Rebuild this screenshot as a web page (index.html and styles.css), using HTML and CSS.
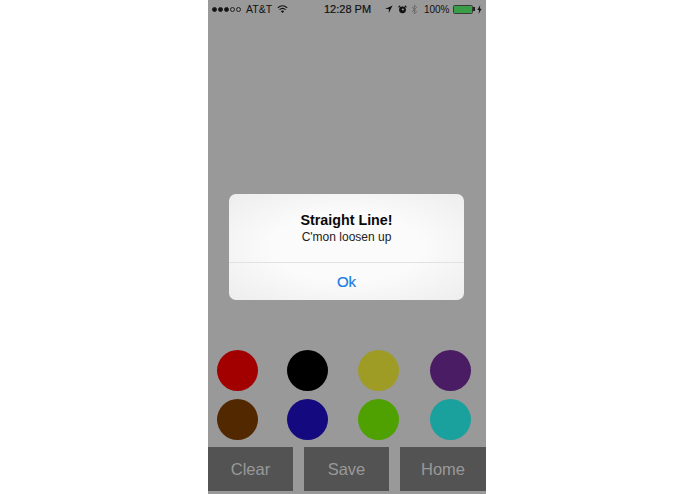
FILE: index.html
```html
<!DOCTYPE html>
<html lang="en">
<head>
<meta charset="utf-8">
<title>Straight Line</title>
<link rel="stylesheet" href="styles.css">
</head>
<body>
<main class="phone">
  <header class="status">
    <div class="status-side">
      <span class="signal"><i class="on"></i><i class="on"></i><i class="on"></i><i></i><i></i></span>
      <span class="carrier">AT&amp;T</span>
      <svg class="wifi" viewBox="0 0 14 10" width="11" height="8"><path d="M1 3.600C4.600.2 9.400.2 13 3.600" fill="none" stroke="#111" stroke-width="1.500"/><path d="M3.200 5.800c2.400-2.200 5.200-2.200 7.600 0" fill="none" stroke="#111" stroke-width="1.500"/><path d="M7 10 4.900 7.800c1.300-1 2.900-1 4.200 0z" fill="#111"/></svg>
    </div>
    <div class="time">12:28 PM</div>
    <div class="status-side status-right">
      <svg class="arrow" viewBox="0 0 10 10" width="8" height="8"><path d="M9.500.5 0 5h4.800V10z" fill="#111"/></svg>
      <svg class="alarm" viewBox="0 0 10 10" width="9" height="9"><circle cx="5" cy="5.400" r="3.800" fill="#111"/><circle cx="5.400" cy="5" r="1.200" fill="#999"/><path d="M.6 2.600 2.400.8M9.400 2.600 7.600.8" stroke="#111" stroke-width="1.300"/></svg>
      <svg class="bt" viewBox="0 0 8 12" width="7" height="11"><path d="M1 3.200 6.400 8.400 3.800 11V1l2.600 2.600L1 8.800" fill="none" stroke="#666" stroke-width="1"/></svg>
      <span class="pct">100%</span>
      <span class="battery"></span><span class="nub"></span>
      <svg class="bolt" viewBox="0 0 5 9" width="5" height="9"><path d="M3.200 0 .4 5h1.700L1.600 9l3-5.200H2.800z" fill="#111"/></svg>
    </div>
  </header>
  <div class="canvas"></div>
  <section class="palette">
    <span class="dot red"></span><span class="dot black"></span><span class="dot olive"></span><span class="dot purple"></span>
    <span class="dot brown"></span><span class="dot navy"></span><span class="dot green"></span><span class="dot teal"></span>
  </section>
  <nav class="toolbar">
    <button class="tool clear">Clear</button>
    <button class="tool save">Save</button>
    <button class="tool home">Home</button>
  </nav>
  <div class="overlay">
    <div class="alert">
      <div class="alert-body">
        <h1 class="alert-title">Straight Line!</h1>
        <p class="alert-text">C'mon loosen up</p>
      </div>
      <div class="alert-action">Ok</div>
    </div>
  </div>
</main>
</body>
</html>
```
FILE: styles.css
```css
html, body { margin: 0; height: 100%; background: #fff; overflow: hidden; }
body { display: flex; justify-content: flex-start; font-family: "Liberation Sans", Arial, sans-serif; }
.phone {
  position: relative;
  margin-left: 208px;
  width: 278px;
  height: 494px;
  background: #999;
  display: flex;
  flex-direction: column;
}
.status {
  height: 18px;
  padding: 0 4px;
  display: flex;
  align-items: center;
  position: relative;
  font-size: 11px;
  color: #111;
  justify-content: space-between;
}
.status-side { display: flex; align-items: center; }
.signal { display: flex; gap: 1px; margin-right: 5px; }
.signal i { border: 1px solid #222; border-radius: 50%; width: 3px; height: 3px; }
.signal i.on { background: #111; }
.carrier { margin-right: 5px; font-size: 10.500px; }
.time { position: absolute; left: 116px; top: 2px; line-height: 14px; -webkit-text-stroke: 0.2px #111; }
.arrow { margin-right: 5px; }
.alarm { margin-right: 4px; }
.bt { margin-right: 6px; }
.pct { margin-right: 3.500px; font-size: 10px; }
.battery { width: 18px; height: 7px; background: #3a9d47; border: 1px solid #3a3a3a; border-radius: 1.500px; display: block; }
.nub { width: 1.500px; height: 4px; background: #222; margin-right: 2.500px; }
.canvas { flex: 1; }
.palette {
  display: grid;
  grid-template-columns: 70px 71px 72px 41px;
  row-gap: 8px;
  padding-left: 9px;
  margin-bottom: 7px;
}
.dot { width: 41px; height: 41px; border-radius: 50%; display: block; }
.red { background: #a20000; }
.black { background: #000; }
.olive { background: #9f9c26; }
.purple { background: #491c63; }
.brown { background: #522800; }
.navy { background: #14097f; }
.green { background: #4ea100; }
.teal { background: #1aa19e; }
.toolbar {
  display: flex;
  justify-content: space-between;
  margin-bottom: 3px;
}
.tool {
  height: 44px;
  border: 0;
  padding: 0;
  background: #535353;
  color: #999;
  font: 16.500px "Liberation Sans", Arial, sans-serif;
}
.clear { width: 85px; }
.save { width: 85.500px; }
.home { width: 86px; }
.overlay {
  position: absolute;
  inset: 0;
  display: flex;
  align-items: center;
  padding-left: 21px;
}
.alert {
  width: 235px;
  height: 106px;
  border-radius: 7px;
  background: radial-gradient(ellipse at center, #fbfbfb 45%, #ededed 100%);
  display: flex;
  flex-direction: column;
  text-align: center;
}
.alert-body { height: 68px; padding-top: 18px; box-sizing: border-box; margin-bottom: 0; border-bottom: 1px solid #e2e2e2; flex: 0 0 69px; }
.alert-title { margin: 0; font-size: 14.300px; line-height: 17px; font-weight: bold; color: #0a0a0a; }
.alert-text { margin: 1px 0 0; font-size: 12px; line-height: 14px; color: #222; }
.alert-action { flex: 1; display: flex; align-items: center; justify-content: center; color: #1a7be0; font-size: 15px; -webkit-text-stroke: 0.2px #1a7be0; }
```
